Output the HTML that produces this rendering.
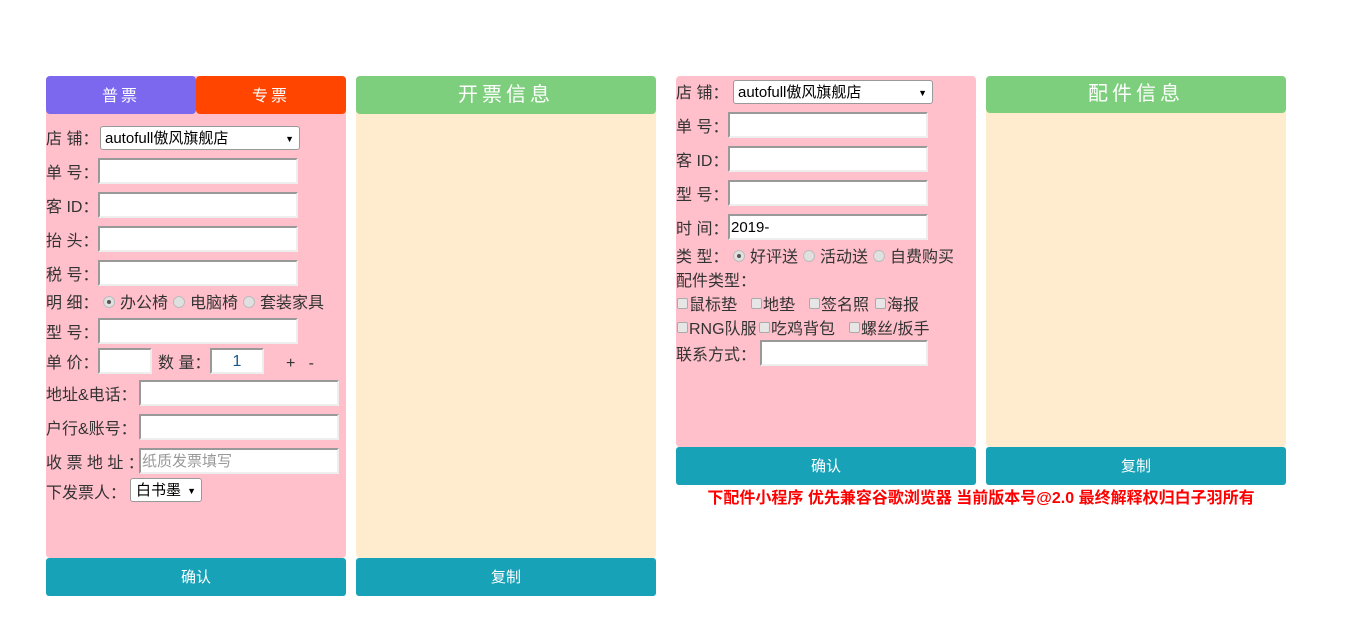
<!DOCTYPE html>
<html><head><meta charset="utf-8"><style>
body{margin:0;width:1345px;height:634px;background:#fff;position:relative;overflow:hidden;font-family:"Liberation Sans","Noto Sans CJK SC",sans-serif;font-size:16px;color:#333}
div,span,input{position:absolute;box-sizing:border-box}
.t{white-space:nowrap;line-height:20px;padding-top:2px}
.in{background:#fff;border:2px solid #999;border-right-color:#eee;border-bottom-color:#eee;border-left-color:#999;height:26px;width:200px}
.sel{background:#fff;border:1px solid #999;border-radius:3px;height:24px;font-size:15px;color:#000;padding-left:4px;line-height:24px;white-space:nowrap}
.sel:after{content:"▼";position:absolute;right:5px;top:0;font-size:9px}
.btn{background:#17a2b8;color:#fff;text-align:center;font-size:15px;border-radius:3px;height:38px;line-height:40px;width:300px}
.rd{width:12px;height:12px;border-radius:50%;background:#e0e0e0;border:1px solid #bbb}
.rd.on:after{content:"";position:absolute;left:3px;top:3px;width:4px;height:4px;border-radius:50%;background:#555}
.cb{width:11px;height:11px;background:#e6e6e6;border:1px solid #aaa;border-radius:2px}
</style></head><body>
<!-- panel 1 -->
<div style="left:46px;top:76px;width:300px;height:482px;background:#ffc0cb;border-radius:4px"></div>
<div style="left:46px;top:76px;width:150px;height:38px;background:#7b68ee;border-radius:4px;color:#fff;text-align:center;line-height:42px;letter-spacing:3px">普票</div>
<div style="left:196px;top:76px;width:150px;height:38px;background:#ff4500;border-radius:4px;color:#fff;text-align:center;line-height:42px;letter-spacing:3px">专票</div>
<div class="t" style="left:46px;top:128px">店 铺：</div><div class="sel" style="left:100px;top:126px;width:200px">autofull傲风旗舰店</div>
<div class="t" style="left:46px;top:162px">单 号：</div><div class="in" style="left:98px;top:158px"></div>
<div class="t" style="left:46px;top:196px">客 ID：</div><div class="in" style="left:98px;top:192px"></div>
<div class="t" style="left:46px;top:230px">抬 头：</div><div class="in" style="left:98px;top:226px"></div>
<div class="t" style="left:46px;top:264px">税 号：</div><div class="in" style="left:98px;top:260px"></div>
<div class="t" style="left:46px;top:292px">明 细：</div>
<div class="rd on" style="left:103px;top:296px"></div><div class="t" style="left:120px;top:292px">办公椅</div>
<div class="rd" style="left:173px;top:296px"></div><div class="t" style="left:190px;top:292px">电脑椅</div>
<div class="rd" style="left:243px;top:296px"></div><div class="t" style="left:260px;top:292px">套装家具</div>
<div class="t" style="left:46px;top:322px">型 号：</div><div class="in" style="left:98px;top:318px"></div>
<div class="t" style="left:46px;top:352px">单 价：</div><div class="in" style="left:98px;top:348px;width:54px"></div>
<div class="t" style="left:158px;top:352px">数 量：</div><div class="in" style="left:210px;top:348px;width:54px;text-align:center;line-height:24px;color:#1a5a8a">1</div>
<div class="t" style="left:286px;top:352px">+&nbsp;&nbsp;&nbsp;-</div>
<div class="t" style="left:46px;top:384px">地址&amp;电话：</div><div class="in" style="left:139px;top:380px"></div>
<div class="t" style="left:46px;top:418px">户行&amp;账号：</div><div class="in" style="left:139px;top:414px"></div>
<div class="t" style="left:46px;top:452px">收 票 地 址 ：</div><div class="in" style="left:139px;top:448px;color:#999;font-size:15px;line-height:24px;padding-left:1px">纸质发票填写</div>
<div class="t" style="left:46px;top:482px">下发票人：</div><div class="sel" style="left:130px;top:478px;width:72px;padding-left:5px">白书墨</div>
<div class="btn" style="left:46px;top:558px">确认</div>
<!-- panel 2 -->
<div style="left:356px;top:76px;width:300px;height:482px;background:#ffebcd;border-radius:4px"></div>
<div style="left:356px;top:76px;width:300px;height:38px;background:#7dcf7d;border-radius:4px;color:#fff;text-align:center;line-height:38px;font-size:20px;letter-spacing:4px">开票信息</div>
<div class="btn" style="left:356px;top:558px">复制</div>
<!-- panel 3 -->
<div style="left:676px;top:76px;width:300px;height:371px;background:#ffc0cb;border-radius:4px"></div>
<div class="t" style="left:676px;top:82px">店 铺：</div><div class="sel" style="left:733px;top:80px;width:200px">autofull傲风旗舰店</div>
<div class="t" style="left:676px;top:116px">单 号：</div><div class="in" style="left:728px;top:112px"></div>
<div class="t" style="left:676px;top:150px">客 ID：</div><div class="in" style="left:728px;top:146px"></div>
<div class="t" style="left:676px;top:184px">型 号：</div><div class="in" style="left:728px;top:180px"></div>
<div class="t" style="left:676px;top:218px">时 间：</div><div class="in" style="left:728px;top:214px;color:#000;font-size:15px;line-height:24px;padding-left:1px">2019-</div>
<div class="t" style="left:676px;top:246px">类 型：</div>
<div class="rd on" style="left:733px;top:250px"></div><div class="t" style="left:750px;top:246px">好评送</div>
<div class="rd" style="left:803px;top:250px"></div><div class="t" style="left:820px;top:246px">活动送</div>
<div class="rd" style="left:873px;top:250px"></div><div class="t" style="left:890px;top:246px">自费购买</div>
<div class="t" style="left:676px;top:270px">配件类型：</div>
<div class="cb" style="left:677px;top:298px"></div><div class="t" style="left:689px;top:294px">鼠标垫</div>
<div class="cb" style="left:751px;top:298px"></div><div class="t" style="left:763px;top:294px">地垫</div>
<div class="cb" style="left:809px;top:298px"></div><div class="t" style="left:821px;top:294px">签名照</div>
<div class="cb" style="left:875px;top:298px"></div><div class="t" style="left:887px;top:294px">海报</div>
<div class="cb" style="left:677px;top:322px"></div><div class="t" style="left:689px;top:318px">RNG队服</div>
<div class="cb" style="left:759px;top:322px"></div><div class="t" style="left:771px;top:318px">吃鸡背包</div>
<div class="cb" style="left:849px;top:322px"></div><div class="t" style="left:861px;top:318px">螺丝/扳手</div>
<div class="t" style="left:676px;top:344px">联系方式：</div><div class="in" style="left:760px;top:340px;width:168px"></div>
<div class="btn" style="left:676px;top:447px">确认</div>
<!-- panel 4 -->
<div style="left:986px;top:76px;width:300px;height:371px;background:#ffebcd;border-radius:4px"></div>
<div style="left:986px;top:76px;width:300px;height:37px;background:#7dcf7d;border-radius:4px;color:#fff;text-align:center;line-height:37px;font-size:20px;letter-spacing:4px">配件信息</div>
<div class="btn" style="left:986px;top:447px">复制</div>
<div class="t" style="left:676px;top:487px;width:610px;text-align:center;color:#f00;font-weight:bold;font-size:16px">下配件小程序 优先兼容谷歌浏览器 当前版本号@2.0 最终解释权归白子羽所有</div>
</body></html>
